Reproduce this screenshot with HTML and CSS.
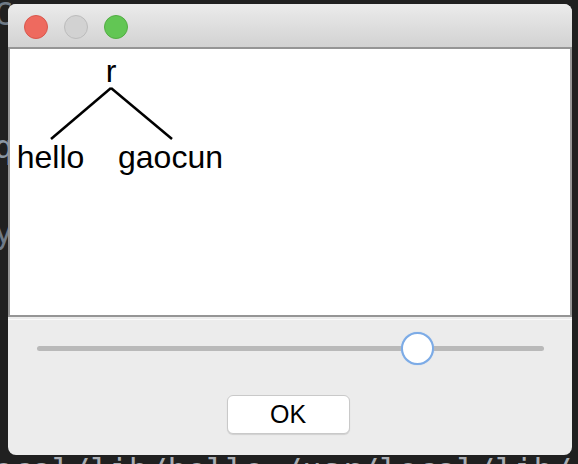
FILE: index.html
```html
<!DOCTYPE html>
<html>
<head>
<meta charset="utf-8">
<link rel="stylesheet" href="styles.css">
</head>
<body>
<pre class="terminal"><span class="t-line t-top">C</span><span class="t-line t-box">q</span><span class="t-line t-v">y</span><span class="t-line t-bottom">ocal/lib/hello:/usr/local/lib/</span></pre>

<div class="window">
  <div class="titlebar">
    <span class="light red"></span>
    <span class="light gray"></span>
    <span class="light green"></span>
  </div>
  <div class="canvas">
    <svg class="tree" width="560" height="266" viewBox="0 0 560 266">
      <line x1="101" y1="39" x2="41" y2="90" />
      <line x1="101" y1="39" x2="162" y2="90" />
      <text x="101" y="33" text-anchor="middle">r</text>
      <text x="40.5" y="119" text-anchor="middle">hello</text>
      <text x="160.5" y="119" text-anchor="middle">gaocun</text>
    </svg>
  </div>
  <div class="panel">
    <div class="slider">
      <div class="track"></div>
      <div class="knob" style="left: 75%"></div>
    </div>
    <button class="ok">OK</button>
  </div>
</div>
</body>
</html>
```

FILE: styles.css
```css
html, body {
  margin: 0;
  padding: 0;
}
body {
  width: 578px;
  height: 464px;
  overflow: hidden;
  background: #202020;
  position: relative;
  font-family: "Liberation Sans", Arial, sans-serif;
}
.terminal {
  margin: 0;
  height: 464px;
  overflow: hidden;
  font-family: "DejaVu Sans Mono", "Liberation Mono", monospace;
  font-size: 32px;
  color: #a9adb3;
  display: flex;
  flex-direction: column;
  margin-left: -6px;
}
.t-line {
  display: block;
  flex: none;
  height: 45px;
  line-height: 45px;
}
.t-top { margin-top: -8px; color: #6f7a86; }
.t-box { margin-top: 88px; color: #8a96a3; }
.t-v { margin-top: 40px; color: #6f7a86; }
.t-bottom { margin-top: 193px; }

.window {
  position: absolute;
  left: 8px;
  top: 4px;
  width: 564px;
  height: 451px;
  border-radius: 8px;
  overflow: hidden;
  background: #ececec;
  display: flex;
  flex-direction: column;
}
.titlebar {
  height: 43px;
  flex: none;
  background: linear-gradient(#ebebeb, #d2d2d2);
  display: flex;
  align-items: center;
  gap: 16px;
  padding-left: 16px;
  box-sizing: border-box;
  padding-top: 2px;
}
.light {
  width: 24px;
  height: 24px;
  border-radius: 50%;
  box-sizing: border-box;
}
.red { background: #ee6a5f; border: 1px solid #d9574d; }
.gray { background: #d2d2d2; border: 1px solid #bcbcbc; }
.green { background: #62c654; border: 1px solid #52ad43; }

.canvas {
  flex: none;
  height: 270px;
  box-sizing: border-box;
  border: 2px solid #959595;
  background: #fff;
}
.tree {
  display: block;
}
.tree line {
  stroke: #000;
  stroke-width: 2.5;
}
.tree text {
  font-family: "Liberation Sans", Arial, sans-serif;
  font-size: 32px;
  fill: #000;
}

.panel {
  flex: 1;
  display: flex;
  flex-direction: column;
  align-items: center;
  box-shadow: inset 0 2px 0 #ececec, inset 0 3px 0 #fafafa;
  padding-top: 15px;
}
.slider {
  position: relative;
  width: 507px;
  height: 33px;
  margin-left: 1px;
  display: flex;
  align-items: center;
}
.track {
  width: 100%;
  height: 5px;
  border-radius: 3px;
  background: #b9b9b9;
}
.knob {
  position: absolute;
  top: 0;
  width: 33px;
  height: 33px;
  margin-left: -16px;
  box-sizing: border-box;
  border-radius: 50%;
  background: #fff;
  border: 2.5px solid #7cabe6;
  box-shadow: 0 0 1px #9cc0ee;
}
.ok {
  margin-top: 30px;
  width: 123px;
  height: 39px;
  margin-left: -4px;
  border: 1px solid #c9c9c9;
  border-radius: 6px;
  background: #fff;
  box-shadow: 0 1px 1px rgba(0,0,0,0.12);
  font-family: "Liberation Sans", Arial, sans-serif;
  font-size: 25px;
  color: #000;
  padding: 0;
}
```
